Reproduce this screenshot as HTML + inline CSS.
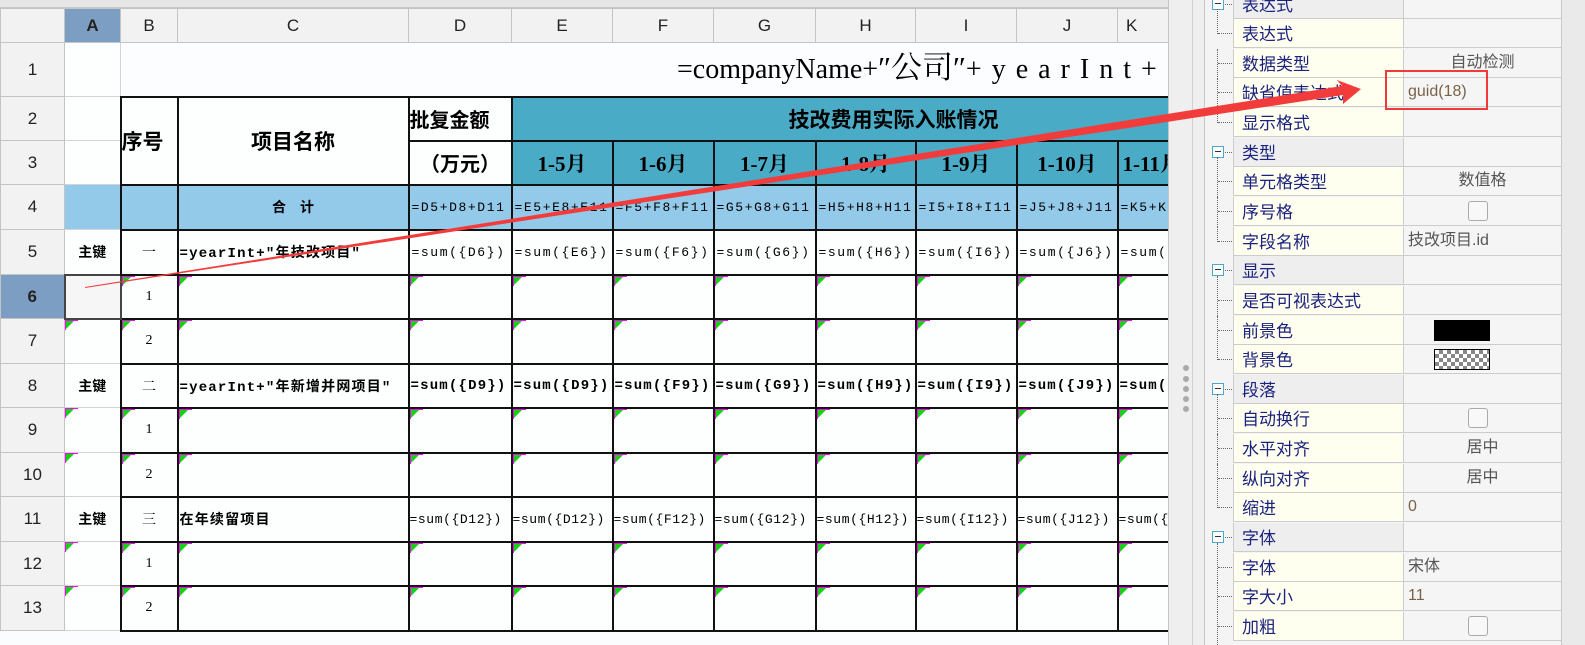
<!DOCTYPE html>
<html><head><meta charset="utf-8"><style>
*{box-sizing:border-box;margin:0;padding:0}
body{width:1585px;height:645px;overflow:hidden;background:#f0f0f0;position:relative;font-family:"Liberation Sans","Noto Sans CJK SC",sans-serif}
#top{position:absolute;left:0;top:0;width:1168px;height:8px;background:#e6e6e6;border-bottom:1px solid #c8c8c8}
#sheet{position:absolute;left:0;top:8px;width:1168px;height:637px;overflow:hidden;background:#fafcfd}
table{border-collapse:collapse;table-layout:fixed;width:1177px}
td{border:1px solid #d4d4d4;text-align:center;vertical-align:middle;white-space:nowrap;overflow:hidden;position:relative;color:#000;font-family:"Liberation Serif","Noto Serif CJK SC",serif;background:#fdfefe}
td.h{background:#f2f2f2;font-family:"Liberation Sans",sans-serif;font-size:17px;color:#222;border-color:#c4c4c4}
td.hs{background:#7c9ec2;font-weight:bold}
td.b{border:2px solid #111}
.tl{background:#4aabc6;font-weight:bold;font-size:21px}
.lb{background:#93c9e9}
.f{font-family:"Liberation Mono","Noto Sans CJK SC",monospace;font-size:13px;letter-spacing:1.6px;text-align:left;padding-left:2px}
.fb{font-family:"Liberation Mono","Noto Sans CJK SC",monospace;font-size:14px;font-weight:bold;text-align:left;padding-left:1px;letter-spacing:1.2px}
.k{font-weight:bold;font-size:14px;font-family:"Noto Sans CJK SC",sans-serif}
.n{font-size:14px}
.t::before{content:"";position:absolute;left:0;top:0;border-top:10px solid #18d018;border-right:10px solid transparent}
.t::after{content:"";position:absolute;left:0;top:0;width:12px;height:9px;border-top:1px solid #f0f;border-left:1px solid #f0f}
#div{position:absolute;left:1168px;top:0;width:37px;height:645px;background:#efefef;border-left:1px solid #c8c8c8}
#div::after{content:"";position:absolute;left:23px;top:0;width:1px;height:645px;background:#d0d0d0}
.dot{position:absolute;left:14px;width:6px;height:6px;border-radius:3px;background:#aaa}
#pp{position:absolute;left:1204px;top:0;width:357px;height:645px;background:#f4f4f4;border-left:1px solid #c8c8c8}
.r{position:absolute;left:0;width:356px;height:29px}
.r .nm{position:absolute;left:28px;top:0;width:171px;height:29px;background:#fffff0;border-left:1px solid #ccc;border-right:1px solid #ccc;border-bottom:1px solid #ccc;color:#1c237e;font-size:17px;line-height:28px;padding-left:8px;font-family:"Noto Sans CJK SC",sans-serif}
.r.g .nm{background:#eeeeee}
.r .v{position:absolute;left:199px;top:0;width:157px;height:29px;background:#f5f5f5;border-bottom:1px solid #ccc;font-size:16px;line-height:28px;color:#555;padding-left:4px;font-family:"Liberation Sans","Noto Sans CJK SC",sans-serif}
.r .v.c{text-align:center;padding-left:0}
.cb{position:absolute;left:64px;top:4px;width:20px;height:20px;border:1px solid #aaa;border-radius:3px;background:#f8f8f8}
.tr{position:absolute;left:12px;width:1px;border-left:1px dotted #666}
.hz{position:absolute;left:13px;top:14px;width:14px;border-top:1px dotted #666}
.mi{position:absolute;left:7px;top:8px;width:12px;height:12px;border:1px solid #4aa8c8;background:#fff}
.mi::after{content:"";position:absolute;left:2px;top:4px;width:6px;height:1px;background:#333}
#rs{position:absolute;left:1561px;top:0;width:24px;height:645px;background:#eaeaea;border-left:1px solid #c8c8c8}
#ttl{position:absolute;left:677px;top:0;height:100%;white-space:nowrap;font-family:'Liberation Serif','Noto Serif CJK SC',serif;font-size:28px;line-height:52px}
</style></head><body>
<div id="top"></div>
<div id="sheet">
<table>
<colgroup><col style="width:64px"><col style="width:56px"><col style="width:57px"><col style="width:231px"><col style="width:103px"><col style="width:101px"><col style="width:101px"><col style="width:102px"><col style="width:100px"><col style="width:101px"><col style="width:101px"><col style="width:60px"></colgroup>
<tr style="height:34px"><td class="h"></td><td class="h hs">A</td><td class="h">B</td><td class="h">C</td><td class="h">D</td><td class="h">E</td><td class="h">F</td><td class="h">G</td><td class="h">H</td><td class="h">I</td><td class="h">J</td><td class="h" style="text-align:left;padding-left:8px">K</td></tr>
<tr style="height:54px"><td class="h">1</td><td></td><td colspan="10" style="background:#fbfdfe"></td></tr>
<tr style="height:44px"><td class="h">2</td><td></td><td class="b" rowspan="2" style="font-size:21px;font-weight:bold;text-align:left;font-family:'Noto Sans CJK SC',sans-serif">序号</td><td class="b" rowspan="2" style="font-size:21px;font-weight:bold;font-family:'Noto Sans CJK SC',sans-serif">项目名称</td><td class="b" style="font-size:20px;font-weight:bold;font-family:'Noto Sans CJK SC',sans-serif;text-align:left">批复金额</td><td class="b tl" colspan="7" style="text-align:left;padding-left:276px;font-family:'Noto Sans CJK SC',sans-serif">技改费用实际入账情况</td></tr>
<tr style="height:44px"><td class="h">3</td><td></td><td class="b" style="font-size:20px;font-weight:bold;font-family:'Noto Sans CJK SC',sans-serif">（万元）</td><td class="b tl">1-5月</td><td class="b tl">1-6月</td><td class="b tl">1-7月</td><td class="b tl">1-8月</td><td class="b tl">1-9月</td><td class="b tl">1-10月</td><td class="b tl" style="text-align:left;padding-left:4px">1-11月</td></tr>
<tr style="height:45px"><td class="h">4</td><td class="lb"></td><td class="b lb"></td><td class="b lb k">合　计</td><td class="b lb f">=D5+D8+D11</td><td class="b lb f">=E5+E8+E11</td><td class="b lb f">=F5+F8+F11</td><td class="b lb f">=G5+G8+G11</td><td class="b lb f">=H5+H8+H11</td><td class="b lb f">=I5+I8+I11</td><td class="b lb f">=J5+J8+J11</td><td class="b lb f">=K5+K8+K11</td></tr>
<tr style="height:45px"><td class="h">5</td><td class="k">主键</td><td class="b n">一</td><td class="b fb">=yearInt+″年技改项目″</td><td class="b f">=sum({D6})</td><td class="b f">=sum({E6})</td><td class="b f">=sum({F6})</td><td class="b f">=sum({G6})</td><td class="b f">=sum({H6})</td><td class="b f">=sum({I6})</td><td class="b f">=sum({J6})</td><td class="b f">=sum({K6})</td></tr>
<tr style="height:44px"><td class="h hs">6</td><td style="border:2px solid #444;background:#f6f6f6"></td><td class="b n t">1</td><td class="b t"></td><td class="b t"></td><td class="b t"></td><td class="b t"></td><td class="b t"></td><td class="b t"></td><td class="b t"></td><td class="b t"></td><td class="b t"></td></tr>
<tr style="height:45px"><td class="h">7</td><td class="t"></td><td class="b n t">2</td><td class="b t"></td><td class="b t"></td><td class="b t"></td><td class="b t"></td><td class="b t"></td><td class="b t"></td><td class="b t"></td><td class="b t"></td><td class="b t"></td></tr>
<tr style="height:44px"><td class="h">8</td><td class="k">主键</td><td class="b n">二</td><td class="b fb">=yearInt+″年新增并网项目″</td><td class="b fb">=sum({D9})</td><td class="b fb">=sum({D9})</td><td class="b fb">=sum({F9})</td><td class="b fb">=sum({G9})</td><td class="b fb">=sum({H9})</td><td class="b fb">=sum({I9})</td><td class="b fb">=sum({J9})</td><td class="b fb">=sum({K9})</td></tr>
<tr style="height:45px"><td class="h">9</td><td class="t"></td><td class="b n t">1</td><td class="b t"></td><td class="b t"></td><td class="b t"></td><td class="b t"></td><td class="b t"></td><td class="b t"></td><td class="b t"></td><td class="b t"></td><td class="b t"></td></tr>
<tr style="height:44px"><td class="h">10</td><td class="t"></td><td class="b n t">2</td><td class="b t"></td><td class="b t"></td><td class="b t"></td><td class="b t"></td><td class="b t"></td><td class="b t"></td><td class="b t"></td><td class="b t"></td><td class="b t"></td></tr>
<tr style="height:45px"><td class="h">11</td><td class="k">主键</td><td class="b n">三</td><td class="b fb">在年续留项目</td><td class="b f" style="letter-spacing:.6px;padding-left:0">=sum({D12})</td><td class="b f" style="letter-spacing:.6px;padding-left:0">=sum({D12})</td><td class="b f" style="letter-spacing:.6px;padding-left:0">=sum({F12})</td><td class="b f" style="letter-spacing:.6px;padding-left:0">=sum({G12})</td><td class="b f" style="letter-spacing:.6px;padding-left:0">=sum({H12})</td><td class="b f" style="letter-spacing:.6px;padding-left:0">=sum({I12})</td><td class="b f" style="letter-spacing:.6px;padding-left:0">=sum({J12})</td><td class="b f" style="letter-spacing:.6px;padding-left:0">=sum({K12})</td></tr>
<tr style="height:44px"><td class="h">12</td><td class="t"></td><td class="b n t">1</td><td class="b t"></td><td class="b t"></td><td class="b t"></td><td class="b t"></td><td class="b t"></td><td class="b t"></td><td class="b t"></td><td class="b t"></td><td class="b t"></td></tr>
<tr style="height:45px"><td class="h">13</td><td class="t"></td><td class="b n t">2</td><td class="b t"></td><td class="b t"></td><td class="b t"></td><td class="b t"></td><td class="b t"></td><td class="b t"></td><td class="b t"></td><td class="b t"></td><td class="b t"></td></tr>
</table>
<div style="position:absolute;left:0;top:34px;width:1168px;height:52px;overflow:hidden"><div id="ttl"><span>=companyName+</span><span style="font-size:31px">″公司″</span><span style="letter-spacing:10px">+yearInt+″年″</span></div></div>
</div>
<div id="div"><div class="dot" style="top:365px"></div><div class="dot" style="top:376px"></div><div class="dot" style="top:386px"></div><div class="dot" style="top:396px"></div><div class="dot" style="top:406px"></div></div>
<div id="pp">
<div class="r g" style="top:-10px"><div class="mi"></div><div class="hz" style="left:20px;width:7px"></div><div class="nm">表达式</div><div class="v"></div></div>
<div class="r" style="top:19px"><div class="tr" style="top:-10px;height:25px"></div><div class="hz"></div><div class="nm">表达式</div><div class="v"></div></div>
<div class="r" style="top:49px"><div class="tr" style="top:0;height:30px"></div><div class="hz"></div><div class="nm">数据类型</div><div class="v c">自动检测</div></div>
<div class="r" style="top:78px"><div class="tr" style="top:0;height:30px"></div><div class="hz"></div><div class="nm">缺省值表达式</div><div class="v" style="color:#7a6248">guid(18)</div></div>
<div class="r" style="top:108px"><div class="tr" style="top:0;height:15px"></div><div class="hz"></div><div class="nm">显示格式</div><div class="v"></div></div>
<div class="r g" style="top:138px"><div class="mi"></div><div class="hz" style="left:20px;width:7px"></div><div class="nm">类型</div><div class="v"></div></div>
<div class="r" style="top:167px"><div class="tr" style="top:-10px;height:40px"></div><div class="hz"></div><div class="nm">单元格类型</div><div class="v c">数值格</div></div>
<div class="r" style="top:197px"><div class="tr" style="top:0;height:30px"></div><div class="hz"></div><div class="nm">序号格</div><div class="v"><div class="cb"></div></div></div>
<div class="r" style="top:227px"><div class="tr" style="top:0;height:15px"></div><div class="hz"></div><div class="nm">字段名称</div><div class="v">技改项目.id</div></div>
<div class="r g" style="top:256px"><div class="mi"></div><div class="hz" style="left:20px;width:7px"></div><div class="nm">显示</div><div class="v"></div></div>
<div class="r" style="top:286px"><div class="tr" style="top:-10px;height:40px"></div><div class="hz"></div><div class="nm">是否可视表达式</div><div class="v"></div></div>
<div class="r" style="top:316px"><div class="tr" style="top:0;height:30px"></div><div class="hz"></div><div class="nm">前景色</div><div class="v"><div style="position:absolute;left:30px;top:4px;width:56px;height:21px;background:#000"></div></div></div>
<div class="r" style="top:345px"><div class="tr" style="top:0;height:15px"></div><div class="hz"></div><div class="nm">背景色</div><div class="v"><div style="position:absolute;left:30px;top:4px;width:56px;height:21px;border:1px solid #000;background-color:#fff;background-image:linear-gradient(45deg,#888 25%,transparent 25%,transparent 75%,#888 75%),linear-gradient(45deg,#888 25%,transparent 25%,transparent 75%,#888 75%);background-size:8px 8px;background-position:0 0,4px 4px"></div></div></div>
<div class="r g" style="top:375px"><div class="mi"></div><div class="hz" style="left:20px;width:7px"></div><div class="nm">段落</div><div class="v"></div></div>
<div class="r" style="top:404px"><div class="tr" style="top:-10px;height:40px"></div><div class="hz"></div><div class="nm">自动换行</div><div class="v"><div class="cb"></div></div></div>
<div class="r" style="top:434px"><div class="tr" style="top:0;height:30px"></div><div class="hz"></div><div class="nm">水平对齐</div><div class="v c">居中</div></div>
<div class="r" style="top:464px"><div class="tr" style="top:0;height:30px"></div><div class="hz"></div><div class="nm">纵向对齐</div><div class="v c">居中</div></div>
<div class="r" style="top:493px"><div class="tr" style="top:0;height:15px"></div><div class="hz"></div><div class="nm">缩进</div><div class="v" style="color:#7a6248">0</div></div>
<div class="r g" style="top:523px"><div class="mi"></div><div class="hz" style="left:20px;width:7px"></div><div class="nm">字体</div><div class="v"></div></div>
<div class="r" style="top:553px"><div class="tr" style="top:-10px;height:40px"></div><div class="hz"></div><div class="nm">字体</div><div class="v">宋体</div></div>
<div class="r" style="top:582px"><div class="tr" style="top:0;height:30px"></div><div class="hz"></div><div class="nm">字大小</div><div class="v" style="color:#7a6248">11</div></div>
<div class="r" style="top:612px"><div class="tr" style="top:0;height:33px"></div><div class="hz"></div><div class="nm">加粗</div><div class="v"><div class="cb"></div></div></div>
</div>
<div id="rs"></div>
<div style="position:absolute;left:1385px;top:70px;width:103px;height:40px;border:2px solid #f03a3a"></div>
<svg style="position:absolute;left:0;top:0" width="1585" height="645"><polygon points="85,287 1342,86 1337,80 1361,89 1343,104 1343,95 85,288" fill="#f23c3c"/></svg>
</body></html>
